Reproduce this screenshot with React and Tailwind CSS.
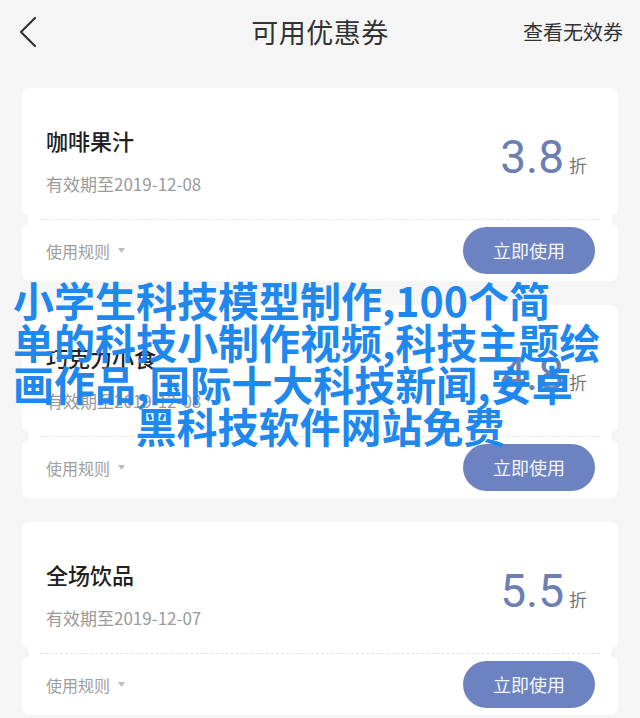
import React from 'react'

const coupons = [
    { name: '咖啡果汁', date: '2019-12-08', rate: '3.8' },
    { name: '巧克力小食', date: '2019-12-08', rate: '4.8' },
    { name: '全场饮品', date: '2019-12-07', rate: '5.5' },
]

function Coupon({ name, date, rate }) {
    return (
        <div className="relative mx-[22px] h-[193px] bg-white rounded-[8px] flex flex-col">
            {/* top part */}
            <div className="h-[131px] flex justify-between shrink-0">
                <div className="pl-[24px] pt-[41px]">
                    <div className="text-[22px] leading-[22px] text-[#222] font-medium">{name}</div>
                    <div className="mt-[24px] text-[17px] leading-[17px] text-[#9a9a9a]">有效期至{date}</div>
                </div>
                <div className="pr-[31px] pt-[46px] flex items-baseline h-fit">
                    <span className="font-['Roboto',sans-serif] text-[46px] leading-[46px] text-[#6b7fb3]">{rate}</span>
                    <span className="ml-[5px] text-[18px] text-[#777]">折</span>
                </div>
            </div>

            {/* dashed divider + notches */}
            <div className="mx-[18px] border-t border-dashed border-[#e3e3e3]" />
            <div className="absolute left-[-7px] top-[124px] w-[14px] h-[14px] rounded-full bg-[#f5f5f5]" />
            <div className="absolute right-[-7px] top-[124px] w-[14px] h-[14px] rounded-full bg-[#f5f5f5]" />

            {/* bottom part */}
            <div className="flex-1 flex items-center justify-between pl-[24px] pr-[23px]">
                <div className="flex items-center gap-[8px] text-[16px] text-[#9e9e9e]">
                    <span>使用规则</span>
                    <svg width="7" height="5" viewBox="0 0 7 5"><path d="M0 0h7L3.5 5z" fill="#bdbdbd" /></svg>
                </div>
                <button className="w-[132px] h-[47px] rounded-full bg-[#6d83c1] text-[18px] text-[#f3f5fb]">立即使用</button>
            </div>
        </div>
    )
}

export default function App() {
    return (
        <div className="relative w-[640px] h-[718px] overflow-hidden bg-[#f5f5f5] font-['Noto_Sans_CJK_SC',sans-serif]">
            {/* header */}
            <div className="h-[64px] grid grid-cols-[1fr_auto_1fr] items-center px-[17px]">
                <div>
                    <svg width="20" height="32" viewBox="0 0 20 32" className="ml-[1px]">
                        <path d="M17 2L3 16l14 14" fill="none" stroke="#333" strokeWidth="2.2" strokeLinecap="round" strokeLinejoin="round" />
                    </svg>
                </div>
                <div className="text-[27px] text-[#333] tracking-[0.5px]">可用优惠券</div>
                <div className="text-right text-[20px] text-[#333]">查看无效券</div>
            </div>

            <div className="pt-[24px] flex flex-col gap-[24px]">
                {coupons.map(c => <Coupon key={c.name} {...c} />)}
            </div>

            {/* watermark caption over the list */}
            <div className="absolute left-[13px] top-[278px] w-[614px] font-bold text-[41px] leading-[42px] text-[#1f88ee]">
                <div>小学生科技模型制作,100个简</div>
                <div>单的科技小制作视频,科技主题绘</div>
                <div>画作品,国际十大科技新闻,安卓</div>
                <div className="text-center">黑科技软件网站免费</div>
            </div>
        </div>
    )
}
